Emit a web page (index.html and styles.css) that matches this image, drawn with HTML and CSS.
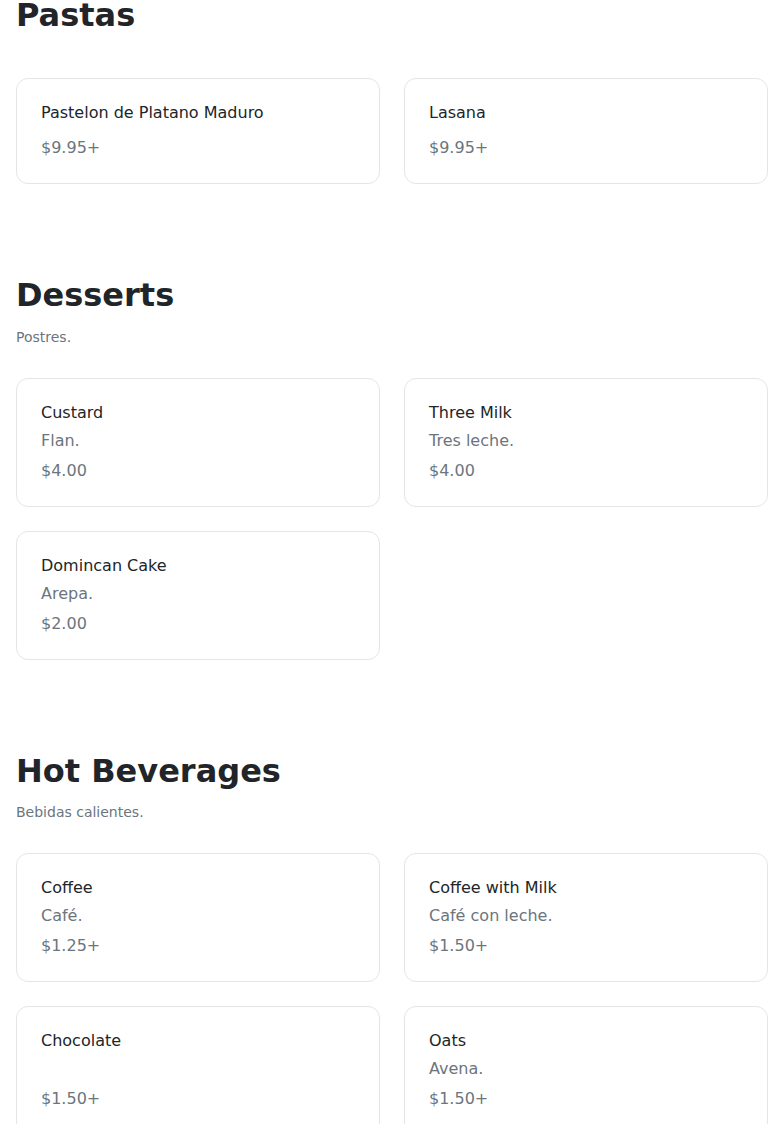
FILE: index.html
```html
<!DOCTYPE html>
<html lang="en">
<head>
    <meta charset="UTF-8">
    <meta name="viewport" content="width=device-width, initial-scale=1.0">
    <title>Menu</title>
    <link rel="stylesheet" href="styles.css">
</head>
<body>
    <main class="menu">
        <!-- Pastas -->
        <section class="category">
            <div class="category-header">
                <h2>Pastas</h2>
            </div>
            <div class="items">
                <div class="item-card no-desc">
                    <h3 class="item-name">Pastelon de Platano Maduro</h3>
                    <div class="item-price">$9.95+</div>
                </div>
                <div class="item-card no-desc">
                    <h3 class="item-name">Lasana</h3>
                    <div class="item-price">$9.95+</div>
                </div>
            </div>
        </section>

        <!-- Desserts -->
        <section class="category">
            <div class="category-header">
                <h2>Desserts</h2>
                <p class="category-desc">Postres.</p>
            </div>
            <div class="items">
                <div class="item-card">
                    <h3 class="item-name">Custard</h3>
                    <p class="item-desc">Flan.</p>
                    <div class="item-price">$4.00</div>
                </div>
                <div class="item-card">
                    <h3 class="item-name">Three Milk</h3>
                    <p class="item-desc">Tres leche.</p>
                    <div class="item-price">$4.00</div>
                </div>
                <div class="item-card">
                    <h3 class="item-name">Domincan Cake</h3>
                    <p class="item-desc">Arepa.</p>
                    <div class="item-price">$2.00</div>
                </div>
            </div>
        </section>

        <!-- Hot Beverages -->
        <section class="category">
            <div class="category-header">
                <h2>Hot Beverages</h2>
                <p class="category-desc">Bebidas calientes.</p>
            </div>
            <div class="items">
                <div class="item-card">
                    <h3 class="item-name">Coffee</h3>
                    <p class="item-desc">Café.</p>
                    <div class="item-price">$1.25+</div>
                </div>
                <div class="item-card">
                    <h3 class="item-name">Coffee with Milk</h3>
                    <p class="item-desc">Café con leche.</p>
                    <div class="item-price">$1.50+</div>
                </div>
                <div class="item-card">
                    <h3 class="item-name">Chocolate</h3>
                    <p class="item-desc"></p>
                    <div class="item-price">$1.50+</div>
                </div>
                <div class="item-card">
                    <h3 class="item-name">Oats</h3>
                    <p class="item-desc">Avena.</p>
                    <div class="item-price">$1.50+</div>
                </div>
            </div>
        </section>
    </main>
</body>
</html>
```

FILE: styles.css
```css
/* Global styles */
body {
    font-family: "DejaVu Sans", sans-serif;
    margin: 0;
    padding: 0;
    background-color: #fff;
    color: #212529;
}

.menu {
    padding: 0 16px;
    margin-top: -4px; /* page is scrolled a little */
}

/* Category styles */
.category {
    margin-bottom: 92px;
}

.category-header {
    padding-bottom: 31px; /* padding so the h2 margin does not collapse into it */
}

.category-header h2 {
    font-size: 32px;
    font-weight: bold;
    line-height: 1.2;
    margin: 0 0 13px;
    color: #212529;
}

.category-desc {
    font-size: 14px;
    line-height: 19px;
    margin: 0;
    color: #6c757d;
}

/* Item cards */
.items {
    display: grid;
    grid-template-columns: 1fr 1fr;
    gap: 24px;
}

.item-card {
    border: 1px solid #e3e5e8;
    border-radius: 12px;
    padding: 24px;
    background-color: #fff;
}

.item-name {
    font-size: 16px;
    font-weight: normal;
    line-height: 20px;
    margin: 0 0 8px;
    color: #212529;
}

.no-desc .item-name {
    margin-bottom: 13px;
}

.item-desc {
    font-size: 16px;
    line-height: 20px;
    min-height: 20px;
    margin: 0 0 8px;
    color: #6c757d;
}

.item-price {
    font-size: 16px;
    line-height: 23px;
    color: #6c757d;
}
```
